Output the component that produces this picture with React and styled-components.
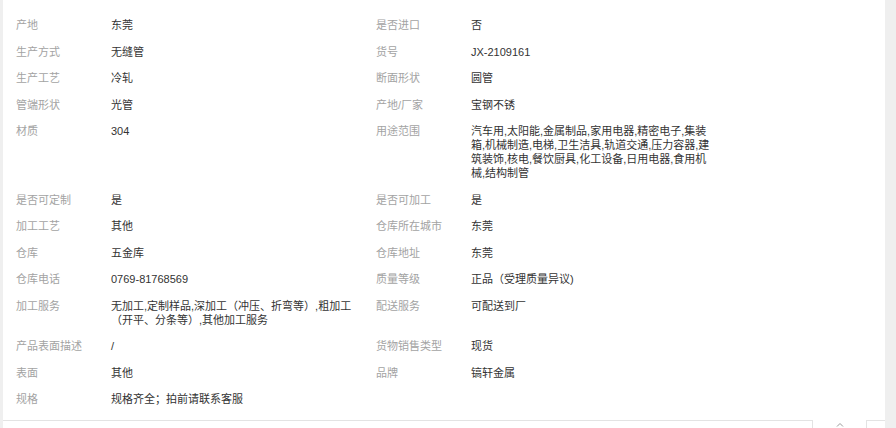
import React from "react";
import styled, { createGlobalStyle } from "styled-components";

const GlobalStyle = createGlobalStyle`
  html, body {
    margin: 0;
    padding: 0;
    overflow: hidden;
    background: #efefef;
  }
  body {
    font-family: "Liberation Sans", "Noto Sans CJK SC", sans-serif;
    font-size: 11px;
  }
`;

const Page = styled.div`
  display: flex;
  padding: 0 11px 0 3px;
  height: 428px;
  box-sizing: border-box;
`;

const Panel = styled.div`
  flex: 1;
  display: flex;
  flex-direction: column;
  background: #fff;
`;

const Grid = styled.div`
  display: grid;
  grid-template-columns: 360px 360px;
  padding: 12px 0 7.5px 13px;
`;

const Field = styled.div`
  display: flex;
  align-items: flex-start;
  padding: 6px 0 6.5px;
  line-height: 14px;
`;

const Label = styled.div`
  width: 95px;
  flex: none;
  color: #a3a3a3;
  white-space: nowrap;
`;

const Value = styled.div`
  width: 243px;
  color: #333;
  word-break: break-all;
`;

const Footer = styled.div`
  display: flex;
  height: 12px;
`;

const FooterBlock = styled.div`
  border-top: 1px solid #e3e3e3;
  ${(p) => (p.$side === "left" ? "border-right: 1px solid #e3e3e3; width: 809px;" : "border-left: 1px solid #e3e3e3; flex: 1;")}
`;

const CaretButton = styled.div`
  width: 53px;
  display: flex;
  justify-content: center;
  padding-top: 2px;
`;

const rows = [
  ["产地", "东莞", "是否进口", "否"],
  ["生产方式", "无缝管", "货号", "JX-2109161"],
  ["生产工艺", "冷轧", "断面形状", "圆管"],
  ["管端形状", "光管", "产地/厂家", "宝钢不锈"],
  [
    "材质",
    "304",
    "用途范围",
    "汽车用,太阳能,金属制品,家用电器,精密电子,集装箱,机械制造,电梯,卫生洁具,轨道交通,压力容器,建筑装饰,核电,餐饮厨具,化工设备,日用电器,食用机械,结构制管",
  ],
  ["是否可定制", "是", "是否可加工", "是"],
  ["加工工艺", "其他", "仓库所在城市", "东莞"],
  ["仓库", "五金库", "仓库地址", "东莞"],
  ["仓库电话", "0769-81768569", "质量等级", "正品（受理质量异议)"],
  ["加工服务", "无加工,定制样品,深加工（冲压、折弯等）,粗加工（开平、分条等）,其他加工服务", "配送服务", "可配送到厂"],
  ["产品表面描述", "/", "货物销售类型", "现货"],
  ["表面", "其他", "品牌", "镐轩金属"],
  ["规格", "规格齐全；拍前请联系客服", null, null],
];

export default function App() {
  return (
    <>
      <GlobalStyle />
      <Page>
        <Panel>
          <Grid>
            {rows.map(([l1, v1, l2, v2], i) => (
              <React.Fragment key={i}>
                <Field>
                  <Label>{l1}</Label>
                  <Value>{v1}</Value>
                </Field>
                {l2 ? (
                  <Field>
                    <Label>{l2}</Label>
                    <Value>{v2}</Value>
                  </Field>
                ) : (
                  <Field />
                )}
              </React.Fragment>
            ))}
          </Grid>
          <Footer>
            <FooterBlock $side="left" />
            <CaretButton>
              <svg width="8" height="5" viewBox="0 0 8 5">
                <path d="M1 4.5 L4 1.5 L7 4.5" fill="none" stroke="#9a9a9a" strokeWidth="1" />
              </svg>
            </CaretButton>
            <FooterBlock $side="right" />
          </Footer>
        </Panel>
      </Page>
    </>
  );
}
